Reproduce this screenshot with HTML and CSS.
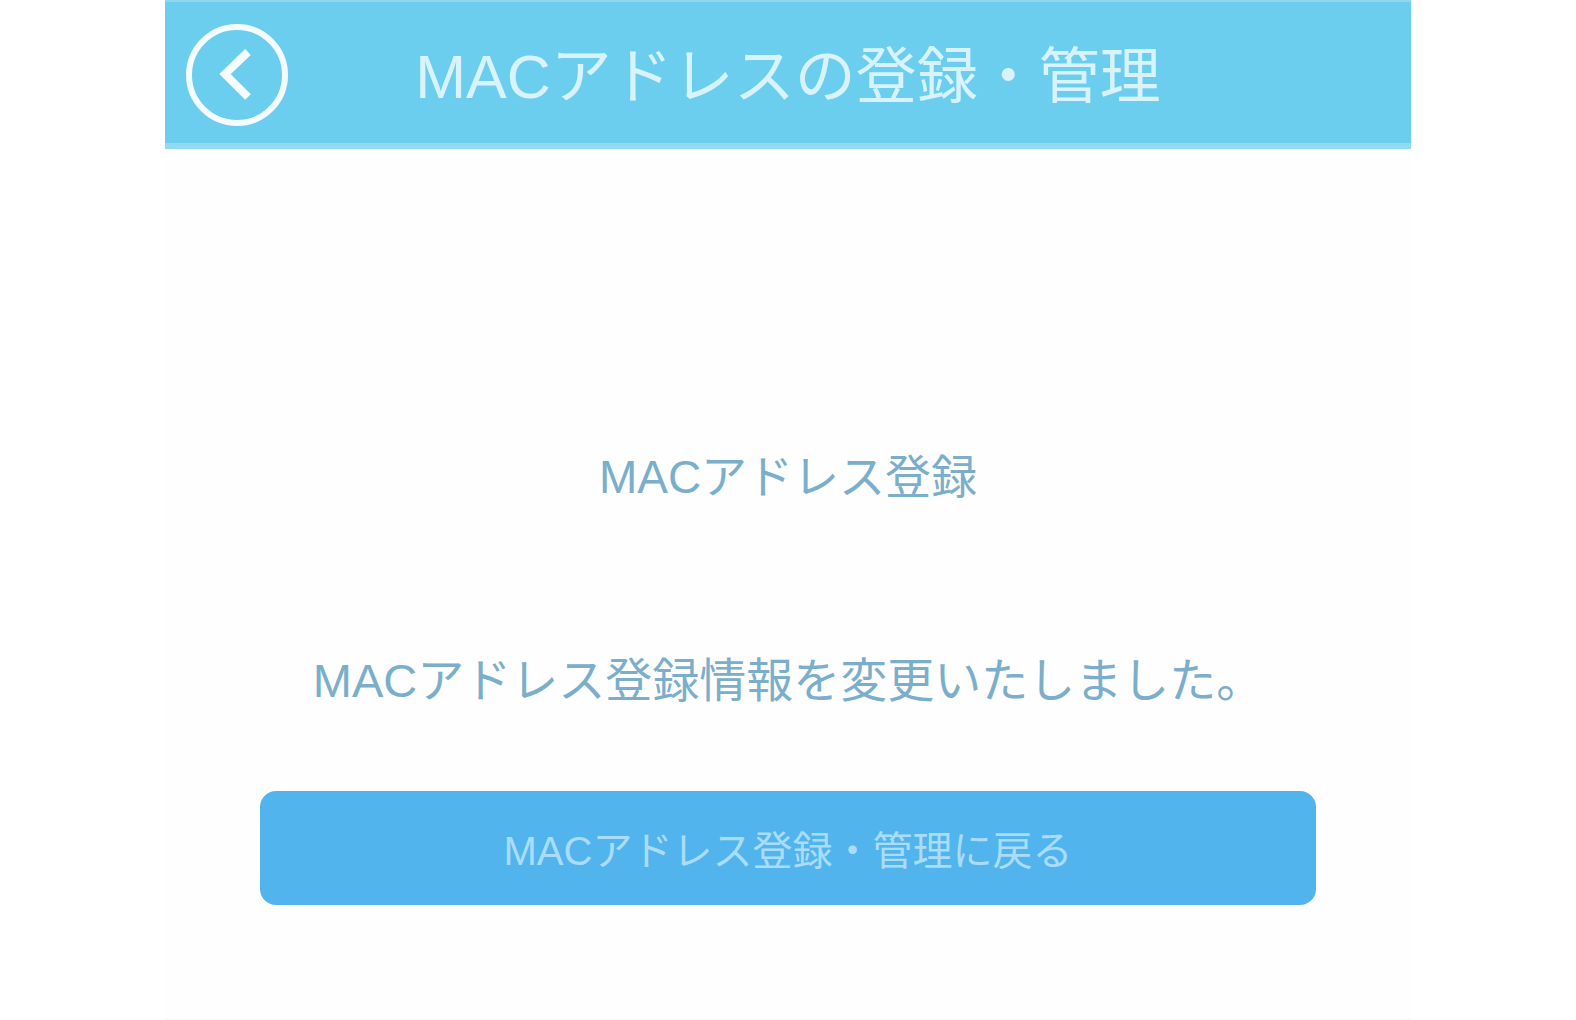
FILE: index.html
```
<!DOCTYPE html>
<html lang="ja">
<head>
    <meta charset="UTF-8">
    <meta name="viewport" content="width=device-width, initial-scale=1.0">
    <title>MACアドレスの登録・管理</title>
    <link rel="stylesheet" href="styles.css">
</head>
<body>
    <div class="container">
        <header class="header">
            <button type="button" class="back" aria-label="戻る">
                <svg viewBox="0 0 104 104" fill="none" stroke="currentColor" stroke-width="6">
                    <circle cx="52" cy="52" r="48"/>
                    <path d="M63 29 L40 51 L63 74" stroke-width="8"/>
                </svg>
            </button>
            <h1>MACアドレスの登録・管理</h1>
        </header>
        <main class="content">
            <h2>MACアドレス登録</h2>
            <p class="message">MACアドレス登録情報を変更いたしました。</p>
            <button type="button" class="return">MACアドレス登録・管理に戻る</button>
        </main>
    </div>
</body>
</html>
```

FILE: styles.css
```
* {
    margin: 0;
    padding: 0;
    box-sizing: border-box;
}

body {
    background: #fff;
    font-family: "Liberation Sans", "Noto Sans CJK JP", sans-serif;
}

.container {
    width: 79%;
    min-height: 100vh;
    margin: 0 auto;
    background: #fefefe;
    border-bottom: 1px solid #f8f8f8;
}

.header {
    display: grid;
    grid-template-columns: 104px 1fr 104px;
    align-items: center;
    padding: 21px 20px 16px;
    background: #6bceef;
    border-top: 2px solid #93d5e9;
    border-bottom: 6px solid #92daf4;
}

.back {
    width: 104px;
    height: 104px;
    border: none;
    background: none;
    color: #f4fcff;
    cursor: pointer;
}

.back svg {
    display: block;
}

h1 {
    padding-top: 4px;
    color: #d8f3fc;
    font-size: 61px;
    line-height: 80px;
    font-weight: 400;
    text-align: center;
    white-space: nowrap;
}

.content {
    display: flex;
    flex-direction: column;
    align-items: center;
    padding: 296px 95px 0;
    text-align: center;
}

h2,
.message {
    color: #7aaeca;
    line-height: 64px;
    font-weight: 400;
    white-space: nowrap;
}

h2 {
    margin-bottom: 140px;
    font-size: 46px;
}

.message {
    margin-bottom: 78px;
    font-size: 47px;
}

.return {
    width: 100%;
    height: 114px;
    border: none;
    border-radius: 16px;
    background: #52b4ec;
    color: #a9dcf8;
    font-family: inherit;
    font-size: 40px;
    cursor: pointer;
}
```
